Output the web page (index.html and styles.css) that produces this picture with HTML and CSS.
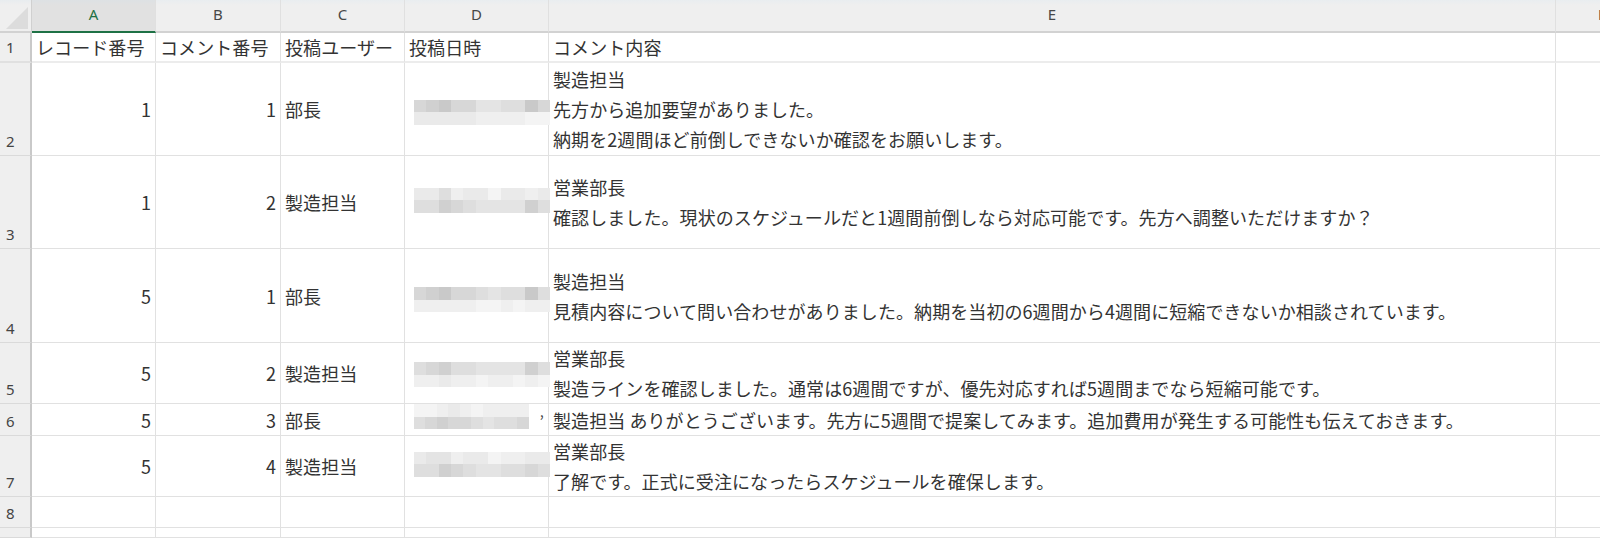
FILE: index.html
```html
<!DOCTYPE html>
<html lang="ja">
<head>
<meta charset="utf-8">
<title>Sheet</title>
<link rel="stylesheet" href="styles.css">
</head>
<body>
<div class="sheet">
  <!-- column header row -->
  <div class="corner"><div class="tri"></div></div>
  <div class="colhdr sel">A</div>
  <div class="colhdr">B</div>
  <div class="colhdr">C</div>
  <div class="colhdr">D</div>
  <div class="colhdr">E</div>
  <div class="colhdr last">F</div>

  <!-- row 1 -->
  <div class="rowhdr r1">1</div>
  <div class="cell r1">レコード番号</div>
  <div class="cell r1">コメント番号</div>
  <div class="cell r1">投稿ユーザー</div>
  <div class="cell r1">投稿日時</div>
  <div class="cell r1">コメント内容</div>
  <div class="cell r1 last"></div>

  <!-- row 2 -->
  <div class="rowhdr">2</div>
  <div class="cell num">1</div>
  <div class="cell num">1</div>
  <div class="cell">部長</div>
  <div class="cell blurcell">
    <div class="blur b2">
      <span class="g3"></span><span class="g2"></span><span class="g1"></span><span class="g3"></span><span class="g3"></span><span class="g5"></span><span class="g5"></span><span class="g4"></span><span class="g4"></span><span class="g1"></span><span class="g3"></span>
      <span class="g6"></span><span class="g6"></span><span class="g6"></span><span class="g6"></span><span class="g6"></span><span class="g7"></span><span class="g7"></span><span class="g7"></span><span class="g7"></span><span class="g8"></span><span class="g8"></span>
    </div>
  </div>
  <div class="cell text">
    <div>製造担当</div>
    <div>先方から追加要望がありました。</div>
    <div>納期を2週間ほど前倒しできないか確認をお願いします。</div>
  </div>
  <div class="cell last"></div>

  <!-- row 3 -->
  <div class="rowhdr">3</div>
  <div class="cell num">1</div>
  <div class="cell num">2</div>
  <div class="cell">製造担当</div>
  <div class="cell blurcell">
    <div class="blur b3">
      <span class="g6"></span><span class="g6"></span><span class="g4"></span><span class="g7"></span><span class="g6"></span><span class="g6"></span><span class="g8"></span><span class="g6"></span><span class="g6"></span><span class="g7"></span><span class="g6"></span>
      <span class="g4"></span><span class="g4"></span><span class="g2"></span><span class="g3"></span><span class="g4"></span><span class="g5"></span><span class="g5"></span><span class="g5"></span><span class="g5"></span><span class="g2"></span><span class="g4"></span>
    </div>
  </div>
  <div class="cell text">
    <div>営業部長</div>
    <div>確認しました。現状のスケジュールだと1週間前倒しなら対応可能です。先方へ調整いただけますか？</div>
  </div>
  <div class="cell last"></div>

  <!-- row 4 -->
  <div class="rowhdr">4</div>
  <div class="cell num">5</div>
  <div class="cell num">1</div>
  <div class="cell">部長</div>
  <div class="cell blurcell">
    <div class="blur b4">
      <span class="g3"></span><span class="g2"></span><span class="g1"></span><span class="g3"></span><span class="g3"></span><span class="g4"></span><span class="g5"></span><span class="g4"></span><span class="g4"></span><span class="g1"></span><span class="g4"></span>
      <span class="g7"></span><span class="g7"></span><span class="g7"></span><span class="g7"></span><span class="g7"></span><span class="g8"></span><span class="g8"></span><span class="g7"></span><span class="g8"></span><span class="g7"></span><span class="g7"></span>
    </div>
  </div>
  <div class="cell text">
    <div>製造担当</div>
    <div>見積内容について問い合わせがありました。納期を当初の6週間から4週間に短縮できないか相談されています。</div>
  </div>
  <div class="cell last"></div>

  <!-- row 5 -->
  <div class="rowhdr">5</div>
  <div class="cell num">5</div>
  <div class="cell num">2</div>
  <div class="cell">製造担当</div>
  <div class="cell blurcell">
    <div class="blur b5">
      <span class="g4"></span><span class="g3"></span><span class="g2"></span><span class="g4"></span><span class="g4"></span><span class="g5"></span><span class="g5"></span><span class="g5"></span><span class="g5"></span><span class="g2"></span><span class="g4"></span>
      <span class="g7"></span><span class="g7"></span><span class="g6"></span><span class="g7"></span><span class="g7"></span><span class="g8"></span><span class="g7"></span><span class="g7"></span><span class="g8"></span><span class="g7"></span><span class="g8"></span>
    </div>
  </div>
  <div class="cell text">
    <div>営業部長</div>
    <div>製造ラインを確認しました。通常は6週間ですが、優先対応すれば5週間までなら短縮可能です。</div>
  </div>
  <div class="cell last"></div>

  <!-- row 6 -->
  <div class="rowhdr">6</div>
  <div class="cell num">5</div>
  <div class="cell num">3</div>
  <div class="cell">部長</div>
  <div class="cell blurcell">
    <div class="blur b6">
      <span class="g8"></span><span class="g8"></span><span class="g7"></span><span class="g6"></span><span class="g7"></span><span class="g8"></span><span class="g7"></span><span class="g7"></span><span class="g7"></span><span class="g7"></span><span class="g0"></span>
      <span class="g4"></span><span class="g3"></span><span class="g2"></span><span class="g3"></span><span class="g3"></span><span class="g4"></span><span class="g5"></span><span class="g4"></span><span class="g4"></span><span class="g3"></span><span class="g0"></span>
    </div>
    <span class="tick">’</span>
  </div>
  <div class="cell">製造担当 ありがとうございます。先方に5週間で提案してみます。追加費用が発生する可能性も伝えておきます。</div>
  <div class="cell last"></div>

  <!-- row 7 -->
  <div class="rowhdr">7</div>
  <div class="cell num">5</div>
  <div class="cell num">4</div>
  <div class="cell">製造担当</div>
  <div class="cell blurcell">
    <div class="blur b7">
      <span class="g6"></span><span class="g5"></span><span class="g5"></span><span class="g7"></span><span class="g6"></span><span class="g6"></span><span class="g8"></span><span class="g7"></span><span class="g7"></span><span class="g6"></span><span class="g6"></span>
      <span class="g4"></span><span class="g4"></span><span class="g2"></span><span class="g3"></span><span class="g4"></span><span class="g5"></span><span class="g5"></span><span class="g4"></span><span class="g4"></span><span class="g3"></span><span class="g4"></span>
    </div>
  </div>
  <div class="cell text">
    <div>営業部長</div>
    <div>了解です。正式に受注になったらスケジュールを確保します。</div>
  </div>
  <div class="cell last"></div>

  <!-- row 8 -->
  <div class="rowhdr">8</div>
  <div class="cell"></div>
  <div class="cell"></div>
  <div class="cell"></div>
  <div class="cell"></div>
  <div class="cell"></div>
  <div class="cell last"></div>

  <!-- row 9 (partial, label below the fold) -->
  <div class="rowhdr"></div>
  <div class="cell"></div>
  <div class="cell"></div>
  <div class="cell"></div>
  <div class="cell"></div>
  <div class="cell"></div>
  <div class="cell last"></div>
</div>
</body>
</html>
```

FILE: styles.css
```css
* { box-sizing: border-box; }

html, body {
  margin: 0;
  padding: 0;
  background: #ffffff;
  width: 1600px;
  height: 538px;
  overflow: hidden;
}

.sheet {
  display: grid;
  grid-template-columns: 32px 124px 125px 124px 144px 1007px 90px;
  grid-template-rows: 33px 30px 93px 93px 94px 61px 32px 61px 31px 10px;
  width: 1646px;
  font-family: "Noto Sans CJK JP", "Noto Sans", sans-serif;
  font-size: 18px;
  letter-spacing: 0.08px;
  color: #333333;
}

/* ---------- column headers ---------- */
.corner {
  background: linear-gradient(#e8ecef 0, #efefef 5px);
  border-right: 1px solid #d0d0d0;
  border-bottom: 2px solid #d2d2d2;
  display: flex;
  justify-content: flex-end;
  align-items: flex-end;
  padding: 0 3px 2px 0;
}
.tri {
  width: 22px;
  height: 22px;
  background: #dcdcdc;
  clip-path: polygon(100% 0, 100% 100%, 0 100%);
}

.colhdr {
  background: linear-gradient(#e9edf0 0, #efefef 5px);
  border-right: 1px solid #e0e0e0;
  border-bottom: 2px solid #d2d2d2;
  display: flex;
  align-items: center;
  justify-content: center;
  padding-bottom: 4px;
  font-family: "Noto Sans", "Open Sans", sans-serif;
  font-size: 15px;
  letter-spacing: 0;
  color: #474747;
}
.colhdr.sel {
  background: linear-gradient(#dde1e4 0, #e1e1e1 5px);
  border-bottom: 2px solid #1e7145;
  color: #1e7145;
}
.colhdr.last {
  justify-content: flex-start;
  padding-left: 42px;
  color: #333;
}

/* ---------- row headers ---------- */
.rowhdr {
  background: #efefef;
  border-right: 2px solid #c9c9c9;
  border-bottom: 1px solid #dadada;
  display: flex;
  align-items: flex-end;
  padding: 0 0 0 6px;
  line-height: 28px;
  font-family: "Noto Sans", "Open Sans", sans-serif;
  font-size: 15px;
  letter-spacing: 0;
  color: #444;
}
.rowhdr.r1 { border-bottom: 2px solid #e0e0e0; }

/* ---------- cells ---------- */
.cell {
  border-right: 1px solid #e1e1e1;
  border-bottom: 1px solid #e1e1e1;
  display: flex;
  flex-direction: column;
  justify-content: center;
  padding: 0 4px;
  line-height: 30px;
  white-space: nowrap;
  overflow: visible;
}
.cell.r1 { border-bottom: 2px solid #ececec; }
.cell.num { align-items: flex-end; }
.cell.last { border-right: none; }

.blurcell {
  position: relative;
  padding-left: 9px;
  padding-right: 0;
}
.blur {
  display: grid;
  grid-template-columns: repeat(11, 1fr);
  grid-template-rows: 12.5px 12.5px;
  width: 136px;
}
.b2 { margin-top: 6px; }
.b3 { margin-top: -4px; }
.b4 { margin-top: 8px; }
.b5 { margin-top: 3px; }
.b6 { margin-top: -6px; width: 126px; }
.b7 { margin-top: -4px; }

.tick {
  position: absolute;
  right: 4px;
  top: 2px;
  font-size: 16px;
  color: #444;
}

.g0 { background: transparent; }
.g1 { background: #c9c9c9; }
.g2 { background: #d0d0d0; }
.g3 { background: #d7d7d7; }
.g4 { background: #dedede; }
.g5 { background: #e4e4e4; }
.g6 { background: #eaeaea; }
.g7 { background: #efefef; }
.g8 { background: #f4f4f4; }
```
